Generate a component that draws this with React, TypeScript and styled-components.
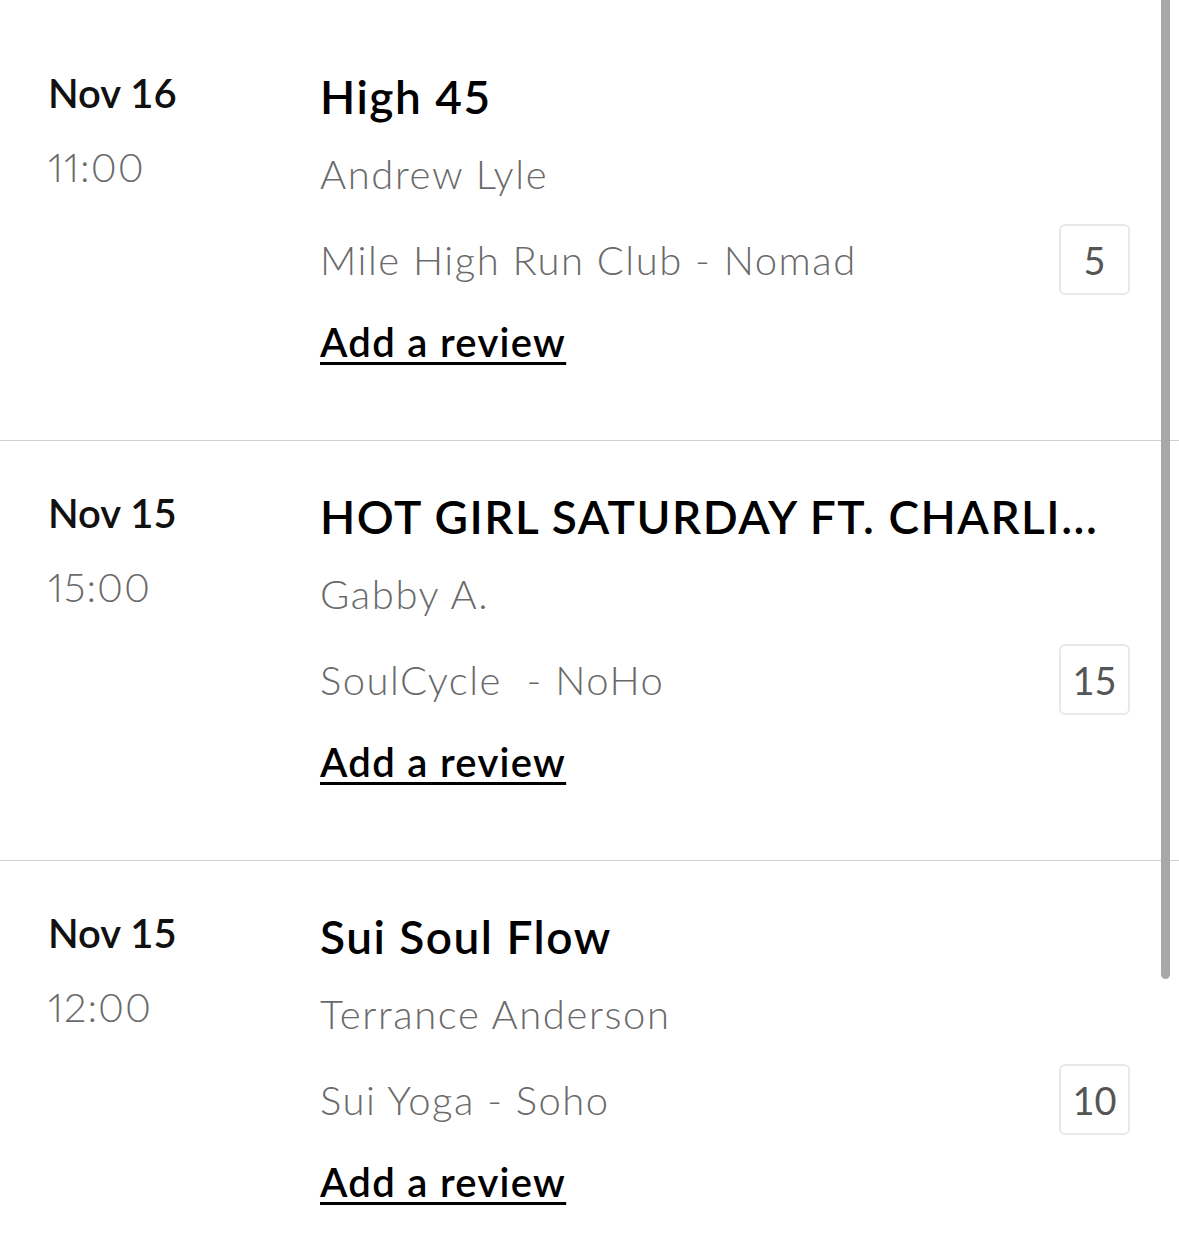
import React from 'react'
import styled, { createGlobalStyle } from 'styled-components'

const GlobalStyle = createGlobalStyle`
    html, body {
        margin: 0;
        padding: 0;
        background: #ffffff;
        font-family: Lato, 'Open Sans', sans-serif;
    }
`

const Page = styled.div`
    position: relative;
    width: 1179px;
    height: 1256px;
    overflow: hidden;
    padding-top: 21px;
    box-sizing: border-box;
    background: #fff;
`

const ScrollThumb = styled.div`
    position: absolute;
    top: 0;
    right: 9px;
    width: 9px;
    height: 979px;
    background: #a8a8a8;
    border-radius: 0 0 5px 5px;
`

const Row = styled.div`
    display: grid;
    grid-template-columns: 272px 1fr;
    padding: 48px 49px 74px 48px;
    border-bottom: 1px solid #cfcfcf;
    &:last-child {
        border-bottom: none;
    }
`

const When = styled.div`
    display: flex;
    flex-direction: column;
`

const DateText = styled.div`
    font-size: 40px;
    line-height: 48px;
    font-weight: 600;
    color: #111;
`

const TimeText = styled.div`
    margin-top: 26px;
    font-size: 40px;
    line-height: 48px;
    font-weight: 300;
    color: #6a6a6a;
    font-variant-numeric: proportional-nums;
    letter-spacing: 1px;
`

const Details = styled.div`
    display: flex;
    flex-direction: column;
    min-width: 0;
`

const Title = styled.div`
    font-size: 46px;
    line-height: 56px;
    font-weight: 600;
    color: #000;
    letter-spacing: 1.5px;
    white-space: nowrap;
    overflow: hidden;
    text-overflow: ellipsis;
`

const Instructor = styled.div`
    margin-top: 25px;
    font-size: 40px;
    line-height: 48px;
    font-weight: 300;
    color: #6a6a6a;
    letter-spacing: 1.6px;
`

const VenueLine = styled.div`
    margin-top: 26px;
    display: flex;
    align-items: center;
    justify-content: space-between;
    height: 71px;
`

const Venue = styled.span`
    font-size: 40px;
    line-height: 48px;
    font-weight: 300;
    color: #6a6a6a;
    letter-spacing: 1.5px;
    white-space: pre;
`

const Spots = styled.div`
    width: 71px;
    height: 71px;
    box-sizing: border-box;
    border: 2px solid #e8e8e8;
    border-radius: 6px;
    display: flex;
    align-items: center;
    justify-content: center;
    font-size: 38px;
    font-weight: 400;
    color: #555;
`

const ReviewLink = styled.a`
    align-self: flex-start;
    margin-top: 23px;
    font-size: 40px;
    line-height: 48px;
    font-weight: 600;
    color: #000;
    letter-spacing: 1.3px;
    text-decoration: underline;
    text-decoration-thickness: 3px;
    text-underline-offset: 5px;
    cursor: pointer;
`

type ClassItem = {
    date: string
    time: string
    title: string
    instructor: string
    venue: string
    spots: number
}

const classes: ClassItem[] = [
    {
        date: 'Nov 16',
        time: '11:00',
        title: 'High 45',
        instructor: 'Andrew Lyle',
        venue: 'Mile High Run Club - Nomad',
        spots: 5,
    },
    {
        date: 'Nov 15',
        time: '15:00',
        title: 'HOT GIRL SATURDAY FT. CHARLI...',
        instructor: 'Gabby A.',
        venue: 'SoulCycle  - NoHo',
        spots: 15,
    },
    {
        date: 'Nov 15',
        time: '12:00',
        title: 'Sui Soul Flow',
        instructor: 'Terrance Anderson',
        venue: 'Sui Yoga - Soho',
        spots: 10,
    },
]

export default function App() {
    return (
        <Page>
            <GlobalStyle />
            {classes.map((c, i) => (
                <Row key={i}>
                    <When>
                        <DateText>{c.date}</DateText>
                        <TimeText>{c.time}</TimeText>
                    </When>
                    <Details>
                        <Title>{c.title}</Title>
                        <Instructor>{c.instructor}</Instructor>
                        <VenueLine>
                            <Venue>{c.venue}</Venue>
                            <Spots>{c.spots}</Spots>
                        </VenueLine>
                        <ReviewLink>Add a review</ReviewLink>
                    </Details>
                </Row>
            ))}
            <ScrollThumb />
        </Page>
    )
}
